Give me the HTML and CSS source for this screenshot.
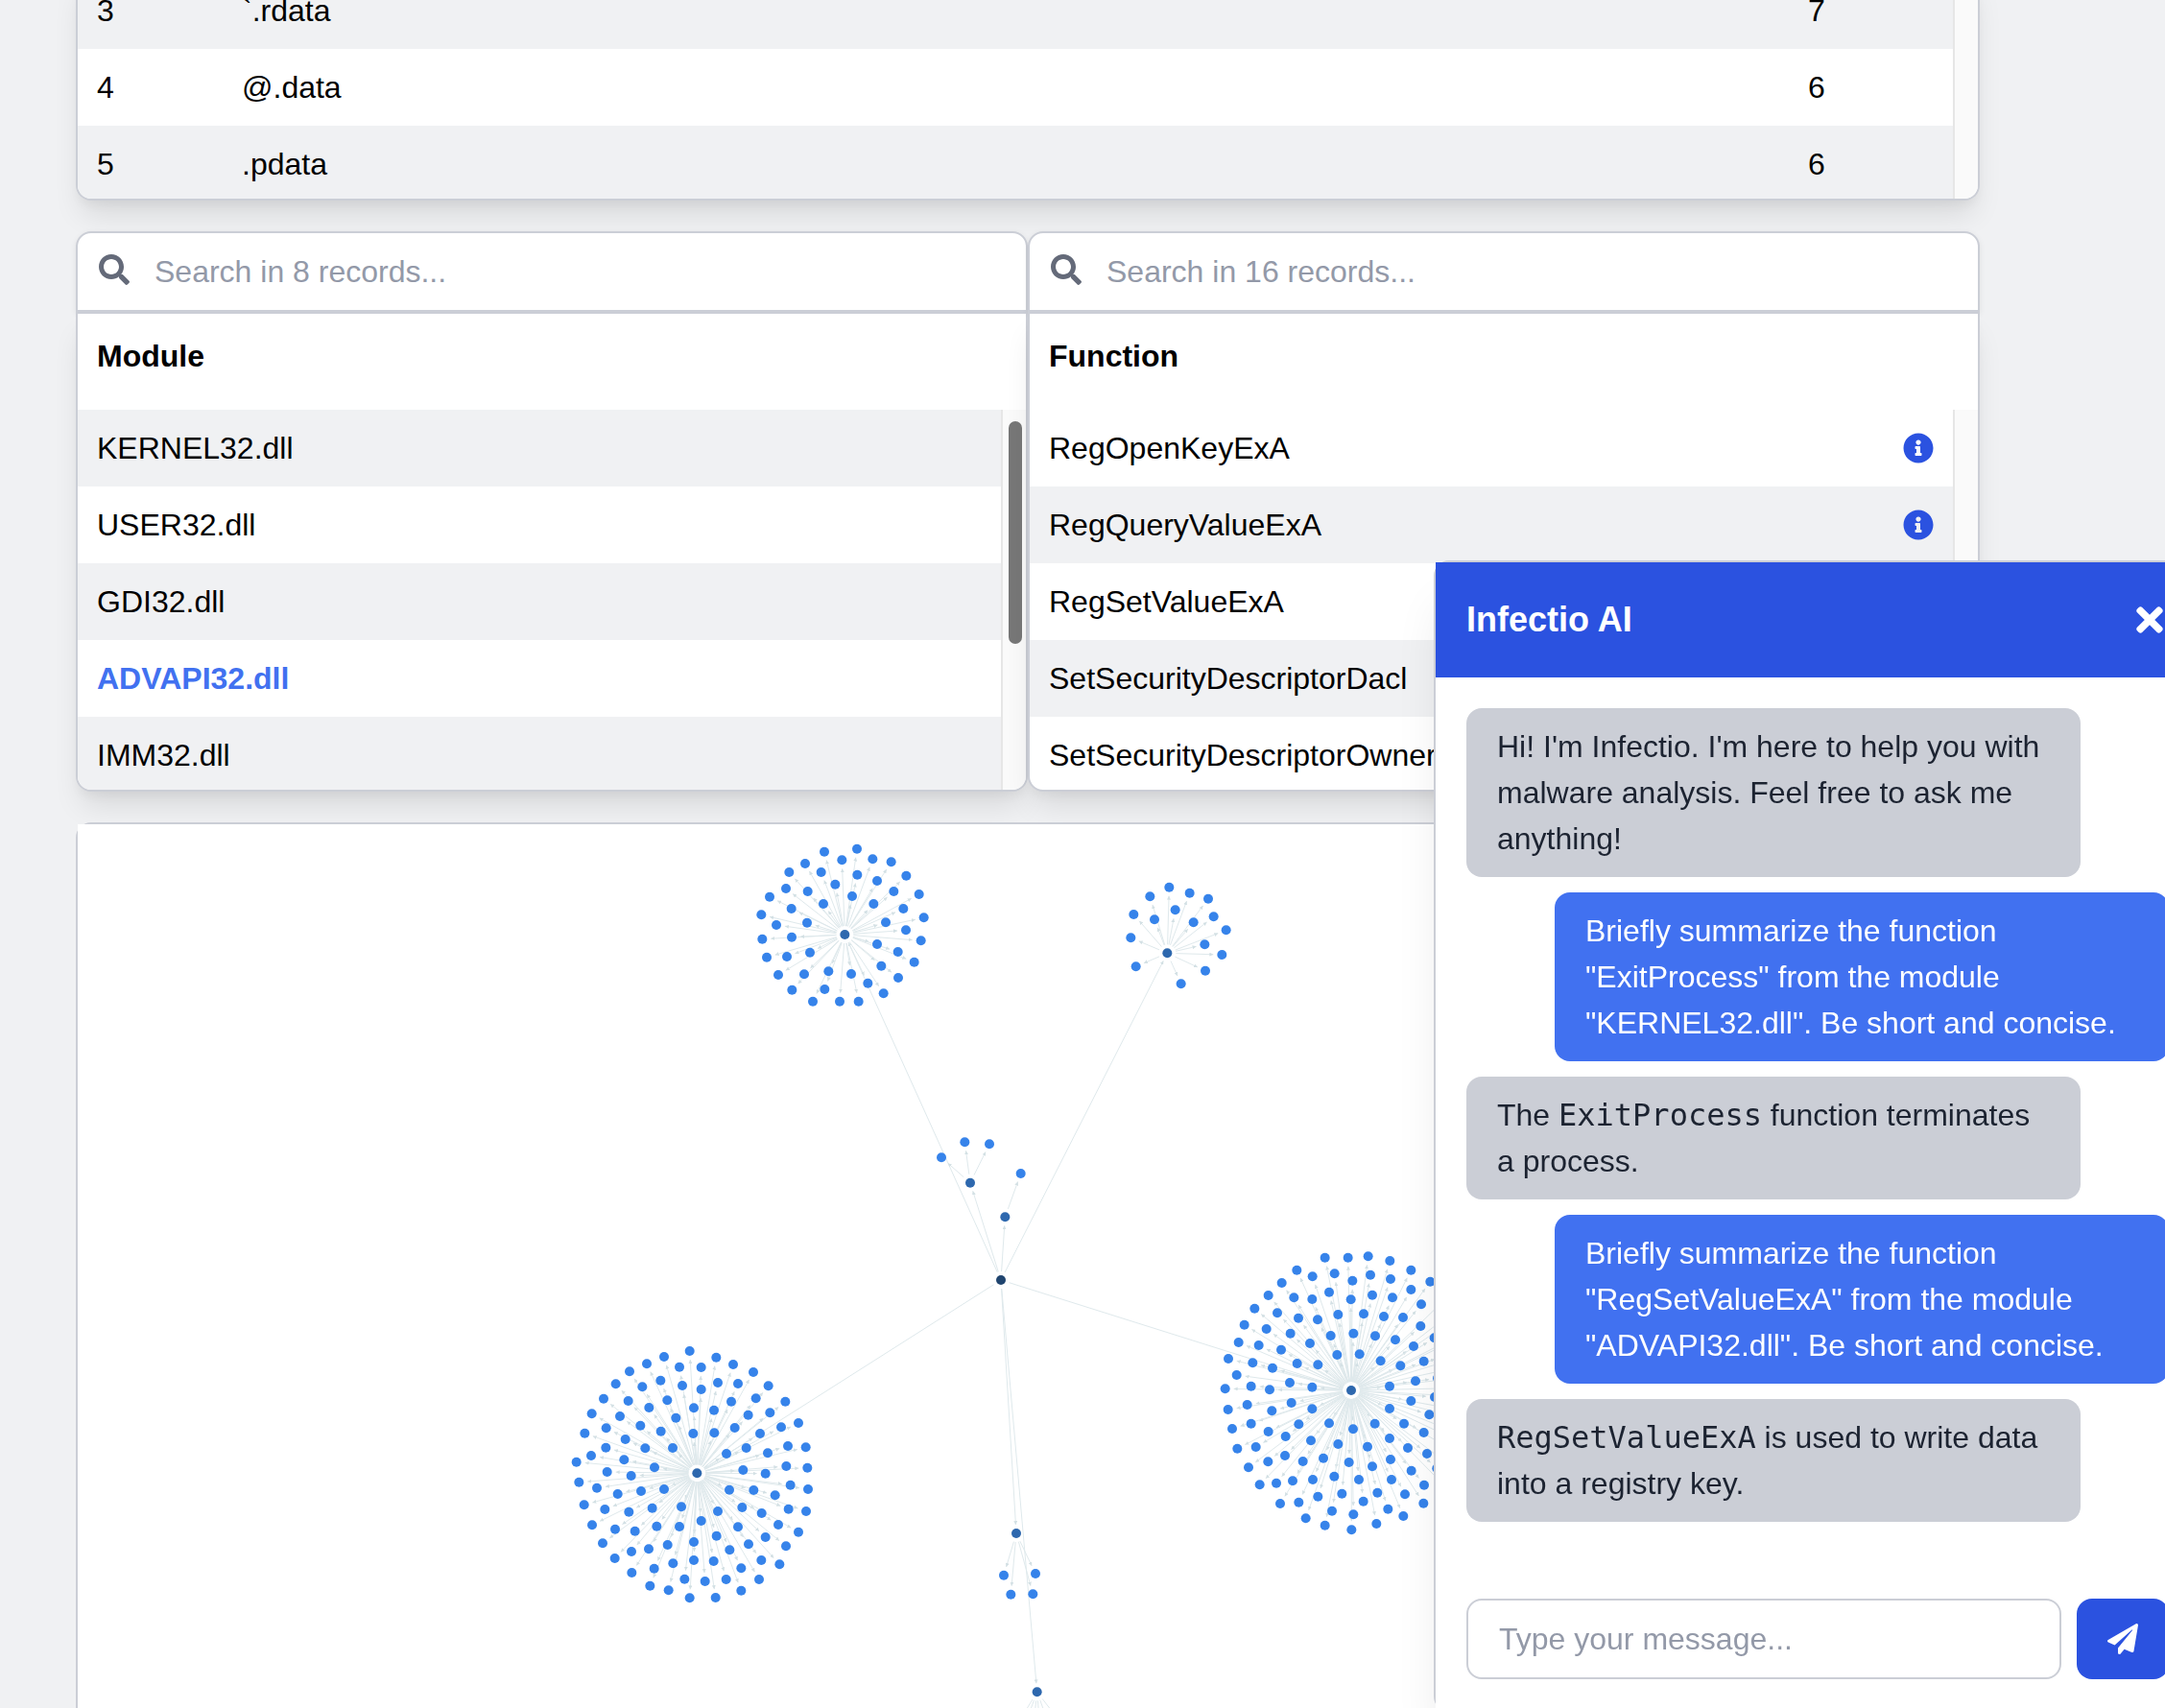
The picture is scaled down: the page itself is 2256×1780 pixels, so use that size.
FILE: index.html
```html
<!DOCTYPE html>
<html lang="en">
<head>
<meta charset="utf-8">
<title>Infectio</title>
<meta name="viewport" content="width=device-width, initial-scale=1">
<link rel="stylesheet" href="styles.css">
</head>
<body>
<svg class="sprite" aria-hidden="true">
  <symbol id="icon-search" viewBox="0 0 512 512"><path d="M505 442.700L405.300 343c-4.500-4.500-10.600-7-17-7H372c27.600-35.300 44-79.700 44-128C416 93.100 322.900 0 208 0S0 93.100 0 208s93.100 208 208 208c48.300 0 92.700-16.400 128-44v16.300c0 6.400 2.500 12.500 7 17l99.700 99.700c9.400 9.400 24.600 9.400 33.900 0l28.300-28.300c9.400-9.400 9.400-24.600.1-34zM208 336c-70.700 0-128-57.200-128-128 0-70.700 57.200-128 128-128 70.700 0 128 57.200 128 128 0 70.700-57.200 128-128 128z"/></symbol>
  <symbol id="icon-info" viewBox="0 0 512 512"><path d="M256 8C119.043 8 8 119.083 8 256c0 136.997 111.043 248 248 248s248-111.003 248-248C504 119.083 392.957 8 256 8zm0 110c23.196 0 42 18.804 42 42s-18.804 42-42 42-42-18.804-42-42 18.804-42 42-42zm56 254c0 6.627-5.373 12-12 12h-88c-6.627 0-12-5.373-12-12v-24c0-6.627 5.373-12 12-12h12v-64h-12c-6.627 0-12-5.373-12-12v-24c0-6.627 5.373-12 12-12h64c6.627 0 12 5.373 12 12v100h12c6.627 0 12 5.373 12 12v24z"/></symbol>
  <symbol id="icon-close" viewBox="0 0 352 512"><path d="M242.720 256l100.070-100.070c12.280-12.280 12.280-32.190 0-44.480l-22.240-22.240c-12.280-12.280-32.190-12.280-44.480 0L176 189.280 75.930 89.210c-12.280-12.280-32.190-12.280-44.480 0L9.210 111.450c-12.280 12.280-12.280 32.190 0 44.480L109.280 256 9.210 356.070c-12.280 12.280-12.280 32.190 0 44.480l22.240 22.240c12.280 12.280 32.200 12.280 44.480 0L176 322.720l100.070 100.070c12.280 12.280 32.200 12.280 44.480 0l22.240-22.240c12.280-12.280 12.280-32.190 0-44.480L242.720 256z"/></symbol>
  <symbol id="icon-send" viewBox="0 0 512 512"><path d="M476 3.200L12.500 270.600c-18.100 10.400-15.800 35.600 2.200 43.200L121 358.400l287.300-253.200c5.500-4.900 13.300 2.600 8.600 8.300L176 407v80.500c0 23.600 28.500 32.900 42.500 15.800L282 426l124.600 52.200c14.200 6 30.400-2.900 33-18.200l72-432C515 7.800 493.300-6.800 476 3.200z"/></symbol>
</svg>

<main class="page">
  <section class="card card--strings" aria-label="Strings">
    <table class="table">
      <colgroup><col class="col-id"><col><col class="col-count"></colgroup>
      <tbody>
        <tr class="striped"><td>3</td><td>`.rdata</td><td>7</td></tr>
        <tr><td>4</td><td>@.data</td><td>6</td></tr>
        <tr class="striped"><td>5</td><td>.pdata</td><td>6</td></tr>
      </tbody>
    </table>
    <div class="gutter"></div>
  </section>

  <div class="imports">
    <section class="panel" aria-label="Modules">
      <label class="search">
        <svg class="icon"><use href="#icon-search"/></svg>
        <input type="search" aria-label="Search modules" placeholder="Search in 8 records...">
      </label>
      <div class="card card--list">
        <table class="table">
          <thead><tr><th>Module</th></tr></thead>
          <tbody>
            <tr class="striped"><td>KERNEL32.dll</td></tr>
            <tr><td>USER32.dll</td></tr>
            <tr class="striped"><td>GDI32.dll</td></tr>
            <tr class="selected"><td>ADVAPI32.dll</td></tr>
            <tr class="striped"><td>IMM32.dll</td></tr>
          </tbody>
        </table>
        <div class="gutter gutter--below-head"><div class="thumb"></div></div>
      </div>
    </section>
    <section class="panel" aria-label="Functions">
      <label class="search">
        <svg class="icon"><use href="#icon-search"/></svg>
        <input type="search" aria-label="Search functions" placeholder="Search in 16 records...">
      </label>
      <div class="card card--list">
        <table class="table">
          <thead><tr><th>Function</th></tr></thead>
          <tbody>
            <tr><td><div class="cell">RegOpenKeyExA<button class="info" aria-label="About RegOpenKeyExA"><svg class="icon"><use href="#icon-info"/></svg></button></div></td></tr>
            <tr class="striped"><td><div class="cell">RegQueryValueExA<button class="info" aria-label="About RegQueryValueExA"><svg class="icon"><use href="#icon-info"/></svg></button></div></td></tr>
            <tr><td>RegSetValueExA</td></tr>
            <tr class="striped"><td>SetSecurityDescriptorDacl</td></tr>
            <tr><td>SetSecurityDescriptorOwner</td></tr>
          </tbody>
        </table>
        <div class="gutter gutter--below-head"></div>
      </div>
    </section>
  </div>

  <section class="graph" aria-label="Import graph">
    <svg class="graph-canvas" id="graph">
      <defs>
        <marker id="arrow" viewBox="0 0 6 6" refX="6" refY="3" markerWidth="4" markerHeight="4" orient="auto"><path class="arrow" d="M0 0L6 3L0 6z"/></marker>
      </defs>
    </svg>
  </section>
</main>

<aside class="chat" aria-label="Infectio AI">
  <header class="chat-head">
    <h2>Infectio AI</h2>
    <button class="chat-close" aria-label="Close"><svg class="icon-x"><use href="#icon-close"/></svg></button>
  </header>
  <div class="chat-log">
    <p class="msg">Hi! I'm Infectio. I'm here to help you with malware analysis. Feel free to ask me anything!</p>
    <p class="msg msg--user">Briefly summarize the function "ExitProcess" from the module "KERNEL32.dll". Be short and concise.</p>
    <p class="msg">The <code>ExitProcess</code> function terminates a process.</p>
    <p class="msg msg--user">Briefly summarize the function "RegSetValueExA" from the module "ADVAPI32.dll". Be short and concise.</p>
    <p class="msg"><code>RegSetValueExA</code> is used to write data into a registry key.</p>
  </div>
  <form class="chat-form">
    <input type="text" aria-label="Message" placeholder="Type your message...">
    <button class="send" type="button" aria-label="Send"><svg class="icon"><use href="#icon-send"/></svg></button>
  </form>
</aside>
<script src="graph.js"></script>
</body>
</html>
```

FILE: styles.css
```css
*, *::before, *::after { box-sizing: border-box; }

:root {
  --line: #cbced6;
  --stripe: #f0f1f3;
  --blue: #2b52e0;
  --blue-light: #4171f0;
  --shadow: 0 20px 30px -6px rgba(0, 0, 0, .1), 0 8px 12px -4px rgba(0, 0, 0, .05);
}

body {
  margin: 0;
  background: #f0f1f3;
  color: #000;
  font: 32px/48px "Liberation Sans", Arial, sans-serif;
}

button, input { font: inherit; color: inherit; }
button { padding: 0; border: 0; background: none; cursor: pointer; }
.sprite { display: none; }
.icon { display: block; flex: none; width: 32px; height: 32px; fill: currentColor; }

.page {
  display: flex;
  flex-direction: column;
  gap: 32px;
  height: 100vh;
  padding: 0 193px 0 79px;
  overflow: hidden;
}

/* cards and tables */
.card {
  display: flex;
  flex: none;
  overflow: hidden;
  border: 2px solid var(--line);
  border-radius: 0 0 16px 16px;
  background: #fff;
  box-shadow: var(--shadow);
}
.card--strings { height: 238px; margin-top: -29px; border-top: 0; }
.card--list { height: 500px; }

.table {
  flex: 1;
  align-self: flex-start;
  border-collapse: collapse;
  table-layout: fixed;
}
.table th { padding: 20px 20px 32px; text-align: left; }
.table td { padding: 16px 20px; }
.striped { background: var(--stripe); }
.selected { color: var(--blue-light); font-weight: bold; }
.col-id { width: 151px; }
.col-count { width: 171px; }
.cell { display: flex; align-items: center; justify-content: space-between; }
.info { color: var(--blue); }

.gutter {
  flex: none;
  width: 26px;
  padding: 12px 4px 12px 6px;
  border-left: 2px solid #e6e6e6;
  background: #fafafa;
}
.gutter--below-head { margin-top: 100px; }
.thumb { height: 232px; width: 14px; border-radius: 7px; background: #777; }

.imports { display: grid; grid-template-columns: 1fr 1fr; }

.search {
  display: flex;
  gap: 26px;
  height: 84px;
  padding: 0 22px;
  border: 2px solid var(--line);
  border-radius: 16px 16px 0 0;
  background: #fff;
  color: #646a79;
  box-shadow: 0 2px 6px rgba(0, 0, 0, .08);
}
.search .icon { margin-top: 22px; }
.search input {
  flex: 1;
  min-width: 0;
  padding: 0;
  border: 0;
  outline: 0;
  background: none;
  color: #000;
}
::placeholder { color: #9399a8; opacity: 1; }

/* import graph */
.graph {
  flex: 1;
  min-height: 0;
  border: 2px solid var(--line);
  border-bottom: 0;
  border-radius: 16px 16px 0 0;
  background: #fff;
}
.graph-canvas { display: block; width: 100%; height: 100%; background: #fff; }
.edge { stroke: #dfe9ec; stroke-width: 1; }
.arrow { fill: #d3e0e4; }
.leaf { fill: #3683ea; }
.hub { fill: #2e68ae; }
.root { fill: #20456f; }

/* chat window */
.chat {
  position: fixed;
  right: -38px;
  bottom: -4px;
  display: flex;
  flex-direction: column;
  width: 800px;
  height: 1200px;
  border: 2px solid var(--line);
  border-radius: 16px;
  background: #fff;
  box-shadow: 0 40px 50px -10px rgba(0, 0, 0, .1), 0 20px 20px -10px rgba(0, 0, 0, .04);
}
.chat-head {
  display: flex;
  align-items: center;
  justify-content: space-between;
  height: 120px;
  padding: 0 38px 0 32px;
  background: var(--blue);
  color: #fff;
}
.chat-head h2 { margin: 0; font-size: 36px; }
.icon-x { display: block; width: 28px; height: 40px; fill: currentColor; }
.chat-log {
  display: flex;
  flex: 1;
  flex-direction: column;
  align-items: flex-start;
  gap: 16px;
  padding: 32px;
}
.msg {
  width: 640px;
  margin: 0;
  padding: 16px 32px;
  border-radius: 16px;
  background: #cbced6;
  color: #1c2331;
}
.msg--user { align-self: flex-end; background: var(--blue-light); color: #fff; }
.msg code { font: 32px/40px "DejaVu Sans Mono", monospace; }
.chat-form { display: flex; gap: 16px; padding: 0 32px 32px; background: #fff; }
.chat-form input {
  flex: 1;
  min-width: 0;
  height: 84px;
  padding: 0 32px;
  border: 2px solid var(--line);
  border-radius: 16px;
  outline: 0;
  background: #fff;
}
.send {
  display: grid;
  place-items: center;
  width: 96px;
  height: 84px;
  border-radius: 16px;
  background: var(--blue);
  color: #fff;
}
```

FILE: graph.js
```js
// Each cluster lists a hub and its leaves in thirds of a pixel,
// measured from the cluster's own corner (left, top) on the canvas.
const clusters = [
  { left: 689, top: 1, hub: [331, 342], leaves: [
    [267,83],[369,74],[322,109],[418,106],[476,115],[207,120],[157,147],[257,147],[370,155],[523,158],
    [301,185],[432,174],[147,198],[215,207],[484,207],[354,222],[563,216],[96,224],[264,246],[421,246],
    [164,261],[514,261],[70,280],[578,289],[213,305],[459,304],[117,312],[522,328],[73,356],[165,350],
    [569,361],[432,372],[497,396],[222,398],[150,411],[87,413],[548,428],[445,440],[280,457],[351,465],
    [204,466],[123,468],[498,477],[403,494],[166,515],[268,513],[452,526],[231,551],[315,551],[374,551]] },
  { left: 1069, top: 41, hub: [199, 280], leaves: [
    [205,74],[269,92],[145,103],[327,110],[224,145],[94,159],[344,166],[159,175],[281,184],[383,208],
    [85,232],[316,253],[370,285],[101,322],[318,335],[242,376]] },
  { left: 869, top: 301, hub: [183, 218], leaves: [[93,139],[166,91],[243,97]] },
  { left: 869, top: 301, hub: [292, 325], leaves: [[341,189]] },
  { left: 499, top: 531, hub: [439, 436], leaves: [
    [416,54],[336,72],[499,74],[282,94],[552,96],[384,104],[452,105],[228,118],[615,120],[325,146],
    [504,153],[185,157],[567,156],[393,162],[662,163],[268,166],[452,174],[147,203],[623,202],[224,210],
    [346,208],[546,212],[715,212],[289,231],[429,232],[492,239],[110,250],[667,247],[599,254],[198,258],
    [373,263],[756,279],[262,287],[557,294],[155,295],[702,292],[326,305],[88,311],[427,312],[493,310],
    [636,312],[215,330],[723,351],[779,355],[154,356],[277,358],[363,357],[593,357],[660,373],[531,375],
    [108,381],[211,394],[62,401],[306,418],[718,414],[784,419],[583,426],[158,432],[653,437],[233,444],
    [70,464],[731,473],[126,482],[336,486],[786,486],[264,492],[540,488],[616,489],[191,501],[683,505],
    [86,535],[390,541],[299,545],[580,543],[151,549],[725,548],[226,557],[504,555],[780,555],[641,561],
    [452,585],[111,598],[693,597],[313,602],[384,603],[567,604],[183,611],[245,617],[756,620],[500,632],
    [653,636],[429,651],[144,655],[347,660],[600,658],[717,664],[288,673],[541,676],[234,681],[182,702],
    [429,708],[640,708],[491,711],[364,718],[697,721],[305,734],[577,733],[235,747],[400,767],[530,768],
    [633,768],[464,774],[292,788],[350,802],[577,803],[416,826],[497,825]] },
  { left: 1179, top: 431, hub: [444, 477], leaves: [
    [362,62],[434,62],[497,58],[565,72],[274,101],[631,101],[323,121],[392,112],[504,116],[567,129],
    [448,134],[227,141],[691,137],[631,162],[375,170],[185,180],[265,187],[322,192],[443,193],[510,179],
    [573,187],[663,208],[142,221],[213,235],[403,240],[483,238],[546,246],[606,249],[279,251],[339,256],
    [110,272],[661,276],[179,285],[254,299],[451,299],[380,306],[519,307],[704,313],[582,319],[92,327],
    [315,330],[155,336],[639,339],[225,350],[400,366],[470,364],[60,378],[536,385],[671,386],[136,391],
    [275,393],[340,397],[598,400],[198,407],[86,429],[714,439],[645,448],[252,453],[131,464],[322,467],
    [564,464],[50,472],[189,475],[705,498],[631,510],[257,516],[119,522],[322,535],[564,534],[59,537],
    [196,541],[688,553],[131,581],[280,583],[375,580],[518,581],[609,581],[72,597],[450,598],[185,606],
    [671,609],[239,621],[564,627],[318,634],[403,645],[146,654],[495,653],[621,657],[88,659],[681,675],
    [237,681],[357,689],[567,693],[293,699],[184,700],[437,702],[123,718],[510,715],[712,721],[632,728],
    [391,746],[324,756],[468,756],[570,756],[261,760],[210,767],[158,772],[672,773],[526,797],[415,800],
    [612,802],[340,809],[482,824],[280,827],[222,831],[670,830],[559,848],[384,854],[451,865],[607,870],
    [302,877],[362,899],[523,894],[445,913],[750,180],[800,230],[745,245],[840,285],[770,310],[730,370],
    [860,350],[800,400],[775,470],[850,430],[870,500],[790,540],[750,600],[850,580],[770,670],[830,660],
    [740,780],[790,740]] },
  { left: 939, top: 711, hub: [117, 84], leaves: [[78,215],[177,210],[100,275],[169,274]] },
  { left: 939, top: 711, hub: [182, 580], leaves: [
    [90,730],[130,720],[165,740],[195,740],[235,725],[275,700]] }
];
const root = [962, 475];
const clearance = 9;
const radius = 5;

const svg = document.getElementById('graph');

function add(name, attrs) {
  const el = document.createElementNS('http://www.w3.org/2000/svg', name);
  for (const key in attrs) el.setAttribute(key, attrs[key]);
  svg.appendChild(el);
}

function edge(a, b) {
  const dx = b[0] - a[0], dy = b[1] - a[1];
  const len = Math.hypot(dx, dy);
  const ux = dx / len * clearance, uy = dy / len * clearance;
  add('line', { class: 'edge', x1: a[0] + ux, y1: a[1] + uy, x2: b[0] - ux, y2: b[1] - uy, 'marker-end': 'url(#arrow)' });
}

function node(p, kind) {
  add('circle', { class: kind, cx: p[0], cy: p[1], r: radius });
}

const placed = clusters.map(c => {
  const at = p => [c.left + p[0] / 3, c.top + p[1] / 3];
  return { hub: at(c.hub), leaves: c.leaves.map(at) };
});

placed.forEach(c => {
  edge(root, c.hub);
  c.leaves.forEach(leaf => edge(c.hub, leaf));
});
placed.forEach(c => {
  c.leaves.forEach(leaf => node(leaf, 'leaf'));
  node(c.hub, 'hub');
});
node(root, 'root');
```
